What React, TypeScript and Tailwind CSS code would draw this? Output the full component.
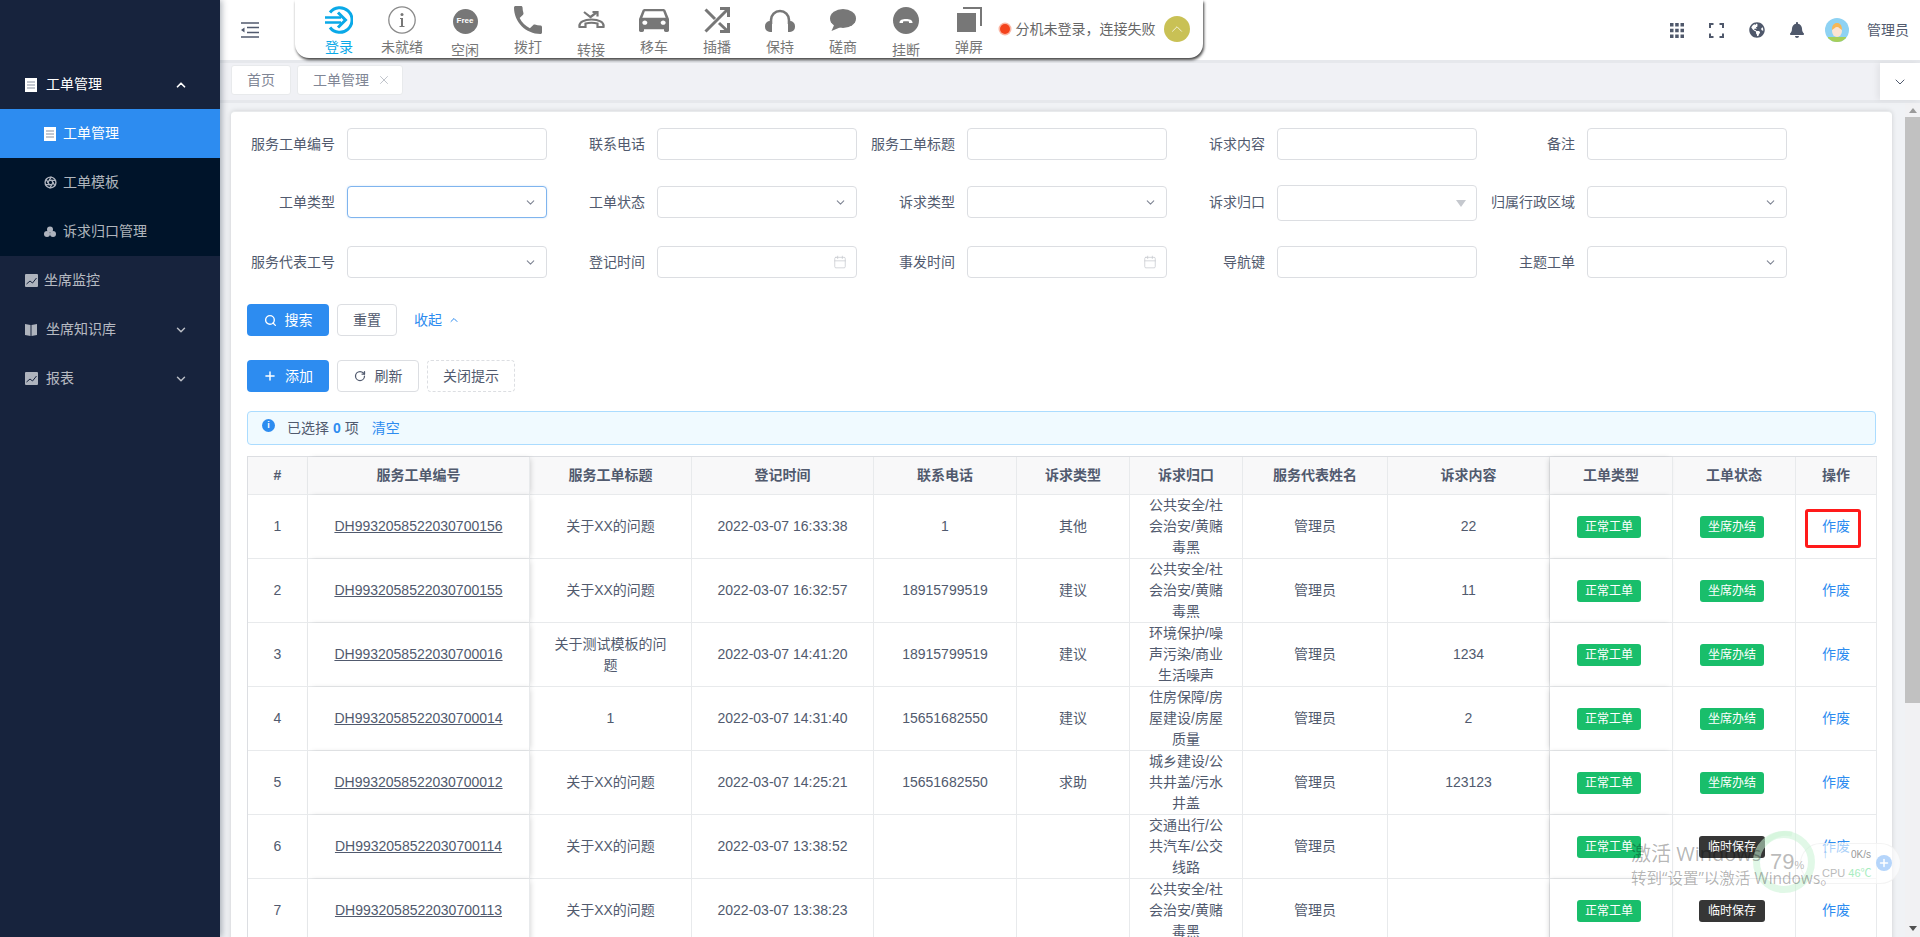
import { Aperture, Calendar, ChevronDown, ChevronUp, Plus, RotateCw, Search, X } from 'lucide-react';
import { FaBell, FaGlobeAmericas } from 'react-icons/fa';

const grey = '#777';

function LoginIcon() {
  return (
    <svg width="28" height="28" viewBox="0 0 28 28" fill="none" stroke="#0aa9e8" strokeWidth="3">
      <path d="M5 6.500A12.300 12.300 0 1 1 5 21.500" />
      <path d="M0 11.500h16M0 16.500h16" strokeWidth="2.400" />
      <path d="M13 6.500l7.500 7.500-7.500 7.500" />
    </svg>
  );
}

function InfoIcon() {
  return (
    <svg width="28" height="28" viewBox="0 0 28 28" fill="none">
      <circle cx="14" cy="14" r="13.200" stroke="#8a8a8a" strokeWidth="1.300" />
      <circle cx="14" cy="8.500" r="1.500" fill={grey} />
      <path d="M12 12h3v8h1.500v1h-5v-1H13v-7h-1z" fill={grey} />
    </svg>
  );
}

function FreeIcon() {
  return (
    <div className="w-[25px] h-[25px] rounded-full bg-[#777] flex items-center justify-center text-white text-[8px] leading-none font-bold mb-[-2px]">
      Free
    </div>
  );
}

function PhoneIcon() {
  return (
    <svg width="28" height="28" viewBox="3 3 18 18" fill={grey}>
      <path d="M6.620 10.790c1.440 2.830 3.760 5.140 6.590 6.590l2.200-2.200c.270-.270.670-.360 1.020-.240 1.120.370 2.330.570 3.570.570.550 0 1 .450 1 1V20c0 .550-.450 1-1 1-9.390 0-17-7.610-17-17 0-.550.450-1 1-1h3.500c.550 0 1 .450 1 1 0 1.250.200 2.450.570 3.570.110.350.030.740-.250 1.020l-2.200 2.200z" />
    </svg>
  );
}

function TransferIcon() {
  return (
    <svg width="27" height="18" viewBox="0 0 27 18" fill="none" stroke={grey} strokeWidth="2.200">
      <path d="M1.500 16c-1-5 5-7.500 12-7.500s13 2.500 12 7.500h-6v-3.500c-4-1-8-1-12 0V16z" />
      <path d="M6 1l6.500 5 6-4.500" />
      <path d="M14.500 1h5v4.500" />
    </svg>
  );
}

function CarIcon() {
  return (
    <svg width="30" height="23" viewBox="3 5 18 16" preserveAspectRatio="none" fill={grey}>
      <path d="M18.920 6.010C18.720 5.420 18.160 5 17.500 5h-11c-.660 0-1.210.420-1.420 1.010L3 12v8c0 .550.450 1 1 1h1c.550 0 1-.450 1-1v-1h12v1c0 .550.450 1 1 1h1c.550 0 1-.450 1-1v-8l-2.080-5.990zM6.500 16c-.830 0-1.500-.670-1.500-1.500S5.670 13 6.500 13s1.500.670 1.500 1.500S7.330 16 6.500 16zm11 0c-.830 0-1.500-.670-1.500-1.500s.670-1.500 1.500-1.500 1.500.670 1.500 1.500-.670 1.500-1.500 1.500zM5 11l1.500-4.500h11L19 11H5z" />
    </svg>
  );
}

function ShuffleIcon() {
  return (
    <svg width="26" height="26" viewBox="0 0 26 26" fill="none" stroke={grey} strokeWidth="3">
      <path d="M1.500 2.500l9.500 9.500M15 16l8.500 8M1.500 24.500L24 2" />
      <path d="M16 1.500h8.500V10M24.500 16v8.500H16" />
    </svg>
  );
}

function HeadsetIcon() {
  return (
    <svg width="30" height="23" viewBox="0 0 30 23" fill={grey}>
      <path d="M6 15v-4a9 9 0 0 1 18 0v4" fill="none" stroke={grey} strokeWidth="2.600" />
      <path d="M7 12v11H5a5 5 0 0 1-5-5v-1a5 5 0 0 1 5-5zM23 12v11h2a5 5 0 0 0 5-5v-1a5 5 0 0 0-5-5z" />
    </svg>
  );
}

function BubbleIcon() {
  return (
    <svg width="26" height="22" viewBox="0 0 26 22" fill={grey}>
      <ellipse cx="13" cy="9.500" rx="13" ry="9.500" />
      <path d="M5 14L1.500 22 11 18z" />
    </svg>
  );
}

function HangupIcon() {
  return (
    <svg width="26" height="27" viewBox="0 0 26 27">
      <ellipse cx="13" cy="13.500" rx="13" ry="13.500" fill={grey} />
      <path d="M6.500 15.500c0-2.500 3-3.500 6.500-3.500s6.500 1 6.500 3.500v.5h-3.500v-1.500c-2-.4-4-.4-6 0V16H6.500z" fill="#fff" />
    </svg>
  );
}

function PopupIcon() {
  return (
    <svg width="26" height="26" viewBox="0 0 26 26" fill={grey}>
      <path d="M7 0h19v19h-2V2H7z" />
      <rect x="0.500" y="5.500" width="20" height="20" stroke="#fff" />
    </svg>
  );
}

const tools = [
  { label: '登录', icon: <LoginIcon />, active: true },
  { label: '未就绪', icon: <InfoIcon /> },
  { label: '空闲', icon: <FreeIcon />, low: true },
  { label: '拨打', icon: <PhoneIcon /> },
  { label: '转接', icon: <TransferIcon />, low: true },
  { label: '移车', icon: <CarIcon /> },
  { label: '插播', icon: <ShuffleIcon /> },
  { label: '保持', icon: <HeadsetIcon /> },
  { label: '磋商', icon: <BubbleIcon /> },
  { label: '挂断', icon: <HangupIcon />, low: true },
  { label: '弹屏', icon: <PopupIcon /> },
];

function DocIcon() {
  return (
    <svg width="12" height="14" viewBox="0 0 12 14">
      <rect width="12" height="14" fill="#fff" />
      <path d="M2 4h8M2 7h8M2 10h8" stroke="#8a93a3" />
    </svg>
  );
}

function ChartIcon() {
  return (
    <svg width="13" height="13" viewBox="0 0 13 13">
      <rect width="13" height="13" rx="1" fill="#aeb3bd" />
      <path d="M1.500 10l3.500-3 2.500 2 4-5" stroke="#17233d" fill="none" />
    </svg>
  );
}

function BookIcon() {
  return (
    <svg width="12" height="13" viewBox="0 0 12 13" fill="#aeb3bd">
      <path d="M0 1l5.500 1v11L0 12zM12 1L6.500 2v11l5.500-1z" />
    </svg>
  );
}

function CloudIcon() {
  return (
    <svg width="12" height="11" viewBox="0 0 12 11" fill="#aeb3bd">
      <circle cx="6" cy="3.500" r="3" />
      <circle cx="3" cy="8" r="3" />
      <circle cx="9" cy="8" r="3" />
    </svg>
  );
}

function Sidebar() {
  return (
    <aside className="w-[220px] shrink-0 bg-[#17233d] pt-[60px] text-[14px] text-white/70 relative z-20 shadow-[2px_0_6px_rgba(0,21,41,0.3)]">
      <div className="h-[49px] flex items-center pl-[25px] pr-[32px] text-white">
        <DocIcon />
        <span className="ml-[9px] flex-1">工单管理</span>
        <ChevronUp size={14} strokeWidth={3} />
      </div>
      <div className="bg-[#00142a]">
        <div className="h-[49px] flex items-center pl-[44px] bg-[#2d8cf0] text-white">
          <DocIcon />
          <span className="ml-[7px]">工单管理</span>
        </div>
        <div className="h-[49px] flex items-center pl-[44px]">
          <Aperture size={13} color="#aeb3bd" strokeWidth={2.5} />
          <span className="ml-[6px]">工单模板</span>
        </div>
        <div className="h-[49px] flex items-center pl-[44px]">
          <CloudIcon />
          <span className="ml-[7px]">诉求归口管理</span>
        </div>
      </div>
      <div className="h-[49px] flex items-center pl-[25px] pr-[32px]">
        <ChartIcon />
        <span className="ml-[6px] flex-1">坐席监控</span>
      </div>
      <div className="h-[49px] flex items-center pl-[25px] pr-[32px]">
        <BookIcon />
        <span className="ml-[9px] flex-1">坐席知识库</span>
        <ChevronDown size={14} strokeWidth={2.5} />
      </div>
      <div className="h-[49px] flex items-center pl-[25px] pr-[32px]">
        <ChartIcon />
        <span className="ml-[8px] flex-1">报表</span>
        <ChevronDown size={14} strokeWidth={2.5} />
      </div>
    </aside>
  );
}

function Header() {
  return (
    <header className="h-[60px] shrink-0 bg-white flex items-start relative z-10">
      <div className="w-[75px] h-full pl-[21px] flex items-center">
        <svg width="18" height="16" viewBox="0 0 18 16" fill="none" stroke="#515a6e" strokeWidth="1.400">
          <path d="M0 1h18M6 5.500h12M6 10.500h12M0 15h18" />
          <path d="M0 8l3.500-2.500v5z" fill="#515a6e" stroke="none" />
        </svg>
      </div>
      <div className="w-[908px] h-[58px] bg-white rounded-b-[14px] pl-[12.500px] flex shadow-[1px_2px_3px_rgba(0,0,0,0.75)]">
        {tools.map((t) => (
          <div key={t.label} className="w-[63px] flex flex-col items-center pt-[6px]">
            <div className="h-[28px] flex items-center justify-center">{t.icon}</div>
            <span className={`text-[14px] leading-[20px] mt-[3px] ${t.active ? 'text-[#0aa9e8]' : 'text-[#777]'} ${t.low ? 'relative top-[2.500px]' : ''}`}>
              {t.label}
            </span>
          </div>
        ))}
        <div className="flex items-center -ml-[1px] h-full">
          <span className="w-[10px] h-[10px] rounded-full bg-[#f4431c] shadow-[0_0_0_1.500px_#fbb7a5]" />
          <span className="ml-[6px] text-[14px] leading-[20px] text-[#666] w-[142px] whitespace-nowrap">分机未登录，连接失败</span>
          <span className="ml-[6px] w-[26px] h-[26px] rounded-full bg-[#c9c155] flex items-center justify-center">
            <ChevronUp size={18} color="#fff" strokeWidth={1} />
          </span>
        </div>
      </div>
      <div className="ml-auto h-full flex items-center text-[#4f586b]">
        <svg className="mr-[25px]" width="14" height="15" viewBox="0 0 14 15" fill="currentColor">
          <path d="M0 0h3.500v3.500H0zM5.200 0h3.500v3.500H5.200zM10.500 0H14v3.500h-3.500zM0 5.700h3.500v3.500H0zM5.200 5.700h3.500v3.500H5.200zM10.500 5.700H14v3.500h-3.500zM0 11.500h3.500V15H0zM5.200 11.500h3.500V15H5.200zM10.500 11.500H14V15h-3.500z" />
        </svg>
        <svg className="mr-[25px]" width="15" height="15" viewBox="0 0 15 15" fill="none" stroke="currentColor" strokeWidth="2">
          <path d="M1 5V1h3.500M10.500 1H14v4M14 10.500V14h-3.500M4.500 14H1v-3.500" />
        </svg>
        <FaGlobeAmericas className="mr-[24px]" size={16} />
        <FaBell className="mr-[20px]" size={16} />
        <svg className="mr-[18px]" width="24" height="24" viewBox="0 0 24 24">
          <defs>
            <clipPath id="avatar-clip">
              <circle cx="12" cy="12" r="12" />
            </clipPath>
          </defs>
          <g clipPath="url(#avatar-clip)">
            <rect width="24" height="24" fill="#8ed2f3" />
            <rect x="3" y="19" width="18" height="6" fill="#a6cf5a" />
            <ellipse cx="12" cy="13" rx="5" ry="6" fill="#fbe3d3" />
            <path d="M7 12c0-5 2-7 5-7s5 2 5 7c-2-1-3-3-5-3s-3 2-5 3z" fill="#f6b756" />
          </g>
        </svg>
        <span className="text-[14px] leading-[20px] text-[#515a6e] mr-[11px]">管理员</span>
      </div>
    </header>
  );
}

function TabBar() {
  return (
    <div className="h-[43px] shrink-0 bg-[#f0f1f5] border-y-[3px] border-[#e6e8ec] flex relative text-[14px]">
      <div className="flex gap-[6px] pl-[11px] pt-[2px]">
        <div className="w-[60px] h-[30px] bg-white border border-[#e8eaec] rounded-[3px] flex items-center justify-center text-[#808695]">首页</div>
        <div className="w-[106px] h-[30px] bg-white border border-[#e8eaec] rounded-[3px] flex items-center pl-[15px] text-[#808695]">
          工单管理
          <X className="ml-[8px]" size={14} color="#a8adb8" strokeWidth={1.25} />
        </div>
      </div>
      <div className="ml-auto w-[40px] bg-white flex items-center justify-center shadow-[-3px_0_6px_rgba(0,0,0,0.06)]">
        <ChevronDown size={16} color="#515a6e" strokeWidth={1.5} />
      </div>
    </div>
  );
}

function Field({ label, kind, focus, tall }: { label: string; kind?: 'select' | 'date' | 'disabled'; focus?: boolean; tall?: boolean }) {
  return (
    <div className="w-[300px] flex items-center">
      <label className="w-[100px] shrink-0 pr-[12px] text-right text-[14px] leading-[20px] text-[#515a6e] whitespace-nowrap">{label}</label>
      <div
        className={`w-[200px] rounded-[4px] border bg-white flex items-center justify-end ${tall ? 'h-[36px] -mt-[1px] -mb-[3px] pr-[9px]' : 'h-[32px] pr-[9px]'} ${
          focus ? 'border-[#7fb4ee] shadow-[0_0_2px_rgba(45,140,240,0.25)]' : 'border-[#dcdee2]'
        }`}
      >
        {kind === 'select' && <ChevronDown size={13} color="#808695" />}
        {kind === 'date' && <Calendar size={14} color="#c5c8ce" strokeWidth={1.25} />}
        {kind === 'disabled' && (
          <svg width="10" height="7" viewBox="0 0 10 7" fill="#c5c8ce" className="mr-[1px]">
            <path d="M0 0h10L5 7z" />
          </svg>
        )}
      </div>
    </div>
  );
}

function FilterForm() {
  return (
    <div>
      <div className="flex gap-[10px] mb-[26px]">
        <Field label="服务工单编号" />
        <Field label="联系电话" />
        <Field label="服务工单标题" />
        <Field label="诉求内容" />
        <Field label="备注" />
      </div>
      <div className="flex gap-[10px] mb-[28px] items-start">
        <Field label="工单类型" kind="select" focus />
        <Field label="工单状态" kind="select" />
        <Field label="诉求类型" kind="select" />
        <Field label="诉求归口" kind="disabled" tall />
        <Field label="归属行政区域" kind="select" />
      </div>
      <div className="flex gap-[10px] mb-[26px]">
        <Field label="服务代表工号" kind="select" />
        <Field label="登记时间" kind="date" />
        <Field label="事发时间" kind="date" />
        <Field label="导航键" />
        <Field label="主题工单" kind="select" />
      </div>
      <div className="flex items-center gap-[8px] text-[14px]">
        <button className="w-[82px] h-[32px] rounded-[4px] bg-[#2d8cf0] text-white flex items-center justify-center gap-[8px]">
          <Search size={13} strokeWidth={2.5} />
          搜索
        </button>
        <button className="w-[60px] h-[32px] rounded-[4px] bg-white border border-[#dcdee2] text-[#515a6e]">重置</button>
        <button className="ml-[9px] text-[#2d8cf0] flex items-center gap-[6px]">
          收起
          <ChevronUp size={12} strokeWidth={2} />
        </button>
      </div>
      <div className="flex items-center gap-[8px] text-[14px] mt-[24px]">
        <button className="w-[82px] h-[32px] rounded-[4px] bg-[#2d8cf0] text-white flex items-center justify-center gap-[8px]">
          <Plus size={14} strokeWidth={2.5} />
          添加
        </button>
        <button className="w-[82px] h-[32px] rounded-[4px] bg-white border border-[#dcdee2] text-[#515a6e] flex items-center justify-center gap-[9px]">
          <RotateCw size={12} strokeWidth={2.5} />
          刷新
        </button>
        <button className="w-[88px] h-[32px] rounded-[4px] bg-white border border-dashed border-[#dcdee2] text-[#515a6e]">关闭提示</button>
      </div>
    </div>
  );
}

const safety = '公共安全/社会治安/黄赌毒黑';
const rows = [
  { no: 'DH9932058522030700156', title: '关于XX的问题', time: '2022-03-07 16:33:38', phone: '1', kind: '其他', dept: safety, content: '22', saved: false },
  { no: 'DH9932058522030700155', title: '关于XX的问题', time: '2022-03-07 16:32:57', phone: '18915799519', kind: '建议', dept: safety, content: '11', saved: false },
  { no: 'DH9932058522030700016', title: '关于测试模板的问题', time: '2022-03-07 14:41:20', phone: '18915799519', kind: '建议', dept: '环境保护/噪声污染/商业生活噪声', content: '1234', saved: false },
  { no: 'DH9932058522030700014', title: '1', time: '2022-03-07 14:31:40', phone: '15651682550', kind: '建议', dept: '住房保障/房屋建设/房屋质量', content: '2', saved: false },
  { no: 'DH9932058522030700012', title: '关于XX的问题', time: '2022-03-07 14:25:21', phone: '15651682550', kind: '求助', dept: '城乡建设/公共井盖/污水井盖', content: '123123', saved: false },
  { no: 'DH9932058522030700114', title: '关于XX的问题', time: '2022-03-07 13:38:52', phone: '', kind: '', dept: '交通出行/公共汽车/公交线路', content: '', saved: true },
  { no: 'DH9932058522030700113', title: '关于XX的问题', time: '2022-03-07 13:38:23', phone: '', kind: '', dept: safety, content: '', saved: true },
];

const th = 'h-[38px] bg-[#f8f8f9] border-r border-b border-[#e8eaec] font-bold text-center';
const td = 'h-[64px] bg-white border-r border-b border-[#e8eaec] px-[18px] text-center';
const shadowLeft = 'relative z-[1] shadow-[2px_0_6px_-2px_rgba(0,0,0,0.2)]';
const shadowRight = 'relative z-[1] shadow-[-2px_0_6px_-2px_rgba(0,0,0,0.2)]';

function OrdersTable() {
  return (
    <table className="table-fixed w-[1629px] border-separate border-spacing-0 border-l border-t border-[#dcdee2] text-[14px] leading-[21px] text-[#515a6e]">
      <colgroup>
        <col className="w-[60px]" />
        <col className="w-[222px]" />
        <col className="w-[162px]" />
        <col className="w-[182px]" />
        <col className="w-[143px]" />
        <col className="w-[113px]" />
        <col className="w-[113px]" />
        <col className="w-[145px]" />
        <col className="w-[162px]" />
        <col className="w-[123px]" />
        <col className="w-[123px]" />
        <col className="w-[81px]" />
      </colgroup>
      <thead>
        <tr>
          <th className={th}>#</th>
          <th className={`${th} ${shadowLeft}`}>服务工单编号</th>
          <th className={th}>服务工单标题</th>
          <th className={th}>登记时间</th>
          <th className={th}>联系电话</th>
          <th className={th}>诉求类型</th>
          <th className={th}>诉求归口</th>
          <th className={th}>服务代表姓名</th>
          <th className={th}>诉求内容</th>
          <th className={`${th} ${shadowRight}`}>工单类型</th>
          <th className={th}>工单状态</th>
          <th className={th}>操作</th>
        </tr>
      </thead>
      <tbody>
        {rows.map((r, i) => (
          <tr key={r.no}>
            <td className={td}>{i + 1}</td>
            <td className={`${td} ${shadowLeft}`}>
              <span className="underline whitespace-nowrap">{r.no}</span>
            </td>
            <td className={td}>{r.title}</td>
            <td className={`${td} !px-0`}>{r.time}</td>
            <td className={td}>{r.phone}</td>
            <td className={td}>{r.kind}</td>
            <td className={td}>{r.dept}</td>
            <td className={td}>管理员</td>
            <td className={td}>{r.content}</td>
            <td className={`${td} !px-0 ${shadowRight}`}>
              <span className="inline-block w-[64px] h-[22px] leading-[22px] mr-[4px] rounded-[3px] bg-[#19be6b] text-white text-[12px]">正常工单</span>
            </td>
            <td className={`${td} !px-0`}>
              {r.saved ? (
                <span className="inline-block w-[66px] h-[22px] leading-[22px] mr-[4px] rounded-[3px] bg-[#363636] text-white text-[12px]">临时保存</span>
              ) : (
                <span className="inline-block w-[64px] h-[22px] leading-[22px] mr-[4px] rounded-[3px] bg-[#19be6b] text-white text-[12px]">坐席办结</span>
              )}
            </td>
            <td className={`${td} !px-0 relative`}>
              <span className="text-[#2d8cf0]">作废</span>
              {i === 0 && <span className="absolute left-[9px] top-[14px] w-[56px] h-[39px] border-[3px] border-[#ff1a1a] rounded-[3px]" />}
            </td>
          </tr>
        ))}
      </tbody>
    </table>
  );
}

function Scrollbar() {
  return (
    <div className="w-[15px] shrink-0 bg-[#f1f1f3] flex flex-col">
      <div className="h-[14px] flex items-center justify-center">
        <svg width="8" height="5" viewBox="0 0 8 5" fill="#9a9a9a">
          <path d="M4 0l4 5H0z" />
        </svg>
      </div>
      <div className="h-[586px] bg-[#c1c1c1]" />
      <div className="mt-auto h-[17px] flex items-center justify-center">
        <svg width="8" height="5" viewBox="0 0 8 5" fill="#505050">
          <path d="M4 5L0 0h8z" />
        </svg>
      </div>
    </div>
  );
}

// 桌面上的激活水印和悬浮球，盖在页面之上
function DesktopOverlay() {
  return (
    <div className="absolute inset-0 z-30 pointer-events-none">
      <div className="absolute left-[1800px] top-[843px] w-[101px] h-[41px] rounded-full bg-white/60 border border-[#eeeeee]/70" />
      <svg className="absolute left-[1750px] top-[828px]" width="68" height="68" viewBox="0 0 68 68" fill="none">
        <circle cx="34" cy="34" r="27.500" stroke="#c8f3d3" strokeOpacity="0.55" strokeWidth="7" />
        <path d="M16 14a27 27 0 0 1 26-8" stroke="#c8f3d3" strokeOpacity="0.4" strokeWidth="5" />
      </svg>
      <div className="absolute left-[1770px] top-[848px] text-[22px] leading-[28px] text-[#777]/50 font-['Liberation_Sans',sans-serif] whitespace-nowrap">
        79<span className="text-[11px]">%</span>
      </div>
      <div className="absolute left-[1851px] top-[849px] text-[10px] leading-[12px] text-[#999] font-['Liberation_Sans',sans-serif]">0K/s</div>
      <div className="absolute left-[1822px] top-[847px] text-[12px] leading-[14px] text-[#8ec2f5]">↑</div>
      <div className="absolute left-[1822px] top-[866px] text-[11px] leading-[14px] text-[#bbb] whitespace-nowrap font-['Liberation_Sans','Noto_Sans_CJK_SC',sans-serif]">
        CPU <span className="text-[#a8edc0]">46℃</span>
      </div>
      <div className="absolute left-[1876px] top-[855px] w-[16px] h-[16px] rounded-full bg-[#b5d5fb] flex items-center justify-center">
        <Plus size={12} color="#fff" strokeWidth={3} />
      </div>
      <div className="absolute left-[1631px] top-[839px] text-[20px] leading-[30px] text-black/30 whitespace-nowrap font-['Open_Sans','Noto_Sans_CJK_SC',sans-serif]">
        激活 Windows
      </div>
      <div className="absolute left-[1631px] top-[868px] text-[15.500px] leading-[20px] text-black/30 whitespace-nowrap font-['Open_Sans','Noto_Sans_CJK_SC',sans-serif]">
        转到“设置”以激活 Windows。
      </div>
    </div>
  );
}

export default function App() {
  return (
    <div className="relative w-full h-[937px] overflow-hidden flex bg-[#f0f2f5] font-['Liberation_Sans','Noto_Sans_CJK_SC',sans-serif]">
      <Sidebar />
      <main className="flex-1 min-w-0 flex flex-col">
        <Header />
        <TabBar />
        <div className="flex-1 min-h-0 flex">
          <div className="flex-1 min-w-0 overflow-hidden pl-[11px] pr-[13px] pt-[8px]">
            <div className="bg-white rounded-[4px] border-t border-[#e8eaec] shadow-[0_0_5px_rgba(0,0,0,0.15)] pt-[16px] px-[16px] h-[900px]">
              <FilterForm />
              <div className="mt-[19px] h-[34px] rounded-[4px] bg-[#f0faff] border border-[#abdcff] flex items-center pl-[14px] text-[14px] text-[#515a6e]">
                <span className="w-[13px] h-[13px] rounded-full bg-[#2d8cf0] text-white text-[9px] leading-[13px] text-center font-bold -mt-[5px]">i</span>
                <span className="ml-[12px]">已选择</span>
                <span className="mx-[4px] text-[#2d8cf0] font-bold">0</span>
                <span>项</span>
                <span className="ml-[13px] text-[#2d8cf0]">清空</span>
              </div>
              <div className="mt-[11px]">
                <OrdersTable />
              </div>
            </div>
          </div>
          <Scrollbar />
        </div>
      </main>
      <DesktopOverlay />
    </div>
  );
}
